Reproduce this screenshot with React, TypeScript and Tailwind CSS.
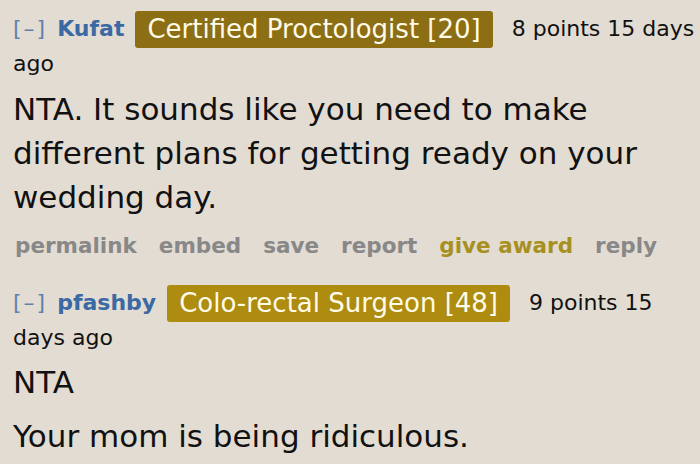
const font = "font-['DejaVu_Sans','Verdana',sans-serif]";

function Header({ user, flair, flairBg, meta }: { user: string; flair: string; flairBg: string; meta: string }) {
  const words = meta.split(" ");
  return (
    <p className="text-[22px] leading-[35px] text-[#111]">
      <span className="mr-[3px] tracking-[2px] text-[#5f82ad]">[–]</span>{" "}
      <span className="font-bold text-[#3b69a4]">{user}</span>
      <span
        className={`mb-[-2px] ml-[11px] mr-[12px] inline-block h-[37px] rounded-[3px] px-[12px] align-top text-[26px] leading-[37px] text-[#fffbe8] ${flairBg}`}
      >
        {flair}
      </span>
      {words.map((w, i) => (
        <span key={i}>
          {" "}
          <span>{w}</span>
        </span>
      ))}
    </p>
  );
}

export default function App() {
  return (
    <div className={`h-[464px] w-[700px] overflow-hidden bg-[#e3dcd3] pl-[13px] pt-[11px] ${font}`}>
      <Header user="Kufat" flair="Certified Proctologist [20]" flairBg="bg-[#8c6e14]" meta="8 points 15 days ago" />
      <p className="mt-[6px] text-[31px] leading-[44px] text-[#111]">
        NTA. It sounds like you need to make different plans for getting ready on your wedding day.
      </p>
      <div className="mt-[12px] flex gap-[22px] text-[21.5px] font-bold leading-[30px] text-[#888]">
        <span className="pl-[2px]">permalink</span>
        <span>embed</span>
        <span>save</span>
        <span>report</span>
        <span className="text-[#a8901e]">give award</span>
        <span>reply</span>
      </div>
      <div className="mt-[24px]">
        <Header user="pfashby" flair="Colo-rectal Surgeon [48]" flairBg="bg-[#ad8c10]" meta="9 points 15 days ago" />
      </div>
      <p className="mt-[5px] text-[31px] leading-[44px] text-[#111]">NTA</p>
      <p className="mt-[10px] text-[31px] leading-[44px] text-[#111]">Your mom is being ridiculous.</p>
    </div>
  );
}
